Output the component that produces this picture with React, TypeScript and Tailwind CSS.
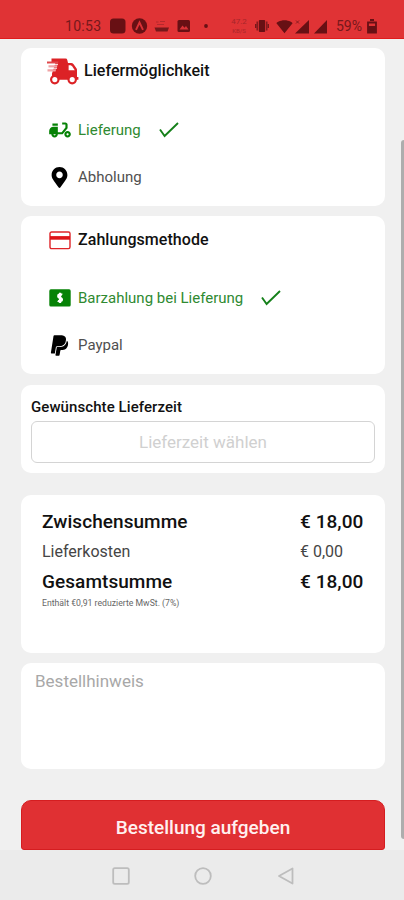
import type { ReactNode } from 'react'
import { FaMapMarkerAlt, FaPaypal } from 'react-icons/fa'
import { MdDeliveryDining, MdSignalWifi4Bar } from 'react-icons/md'

interface OptionProps {
  icon: ReactNode
  label: string
  selected?: boolean
}

function Check() {
  return (
    <svg width="20" height="16" viewBox="0 0 20 16" fill="none" stroke="#15801a" strokeWidth="1.9">
      <path d="M1 7.5 L5.6 14 L19 1" />
    </svg>
  )
}

function TruckIcon() {
  return (
    <svg width="32" height="27" viewBox="0 0 32 27" fill="none">
      <path d="M4.5 0.6 H18.5 Q20 0.6 20.3 2 L21 5 H24.2 Q25.6 5 26.6 6.3 L29.6 10.6 Q30 11.2 30 12 V19 H31.4 V21.8 H5 V15.6 L8.5 4.4 H4.5Z" fill="#dc2226" />
      <path d="M0 3.4 H11.5 L10.8 5.6 H0Z" fill="#e0484b" />
      <path d="M1.5 7.3 H10.5 L9.9 9.5 H1.5Z M0.5 11.2 H9.2 L8.5 13.4 H0.5Z" fill="#f0a3a5" />
      <path d="M2 6.4 H11 M1 10.3 H10" stroke="#fff" strokeWidth="0.9" />
      <path d="M21.6 7.2 H23.6 Q24.6 7.4 25.3 8.4 L27.8 12.2 H21.6Z" fill="#fff" />
      <circle cx="7.8" cy="21.6" r="3.7" fill="#fff" stroke="#dc2226" strokeWidth="2.2" />
      <circle cx="25.2" cy="21.6" r="3.7" fill="#fff" stroke="#dc2226" strokeWidth="2.2" />
    </svg>
  )
}

function CardIcon() {
  return (
    <svg width="22" height="19" viewBox="0 0 22 19" fill="none">
      <rect x="1" y="1" width="20" height="16.6" rx="1.6" stroke="#df2428" strokeWidth="1.4" />
      <path d="M1 6.9 H21" stroke="#df1418" strokeWidth="3.6" />
    </svg>
  )
}

function CashIcon() {
  return (
    <svg width="22" height="18" viewBox="0 0 22 18">
      <rect x="0.3" y="0.3" width="21.4" height="17.2" rx="1.6" fill="#068206" />
      <path d="M13.2 5.8 Q11 4.6 9.4 6.1 Q8.6 8.2 11 8.8 Q13.6 9.5 12.7 11.5 Q11 13 8.8 11.7 M11.1 3.8 V14" fill="none" stroke="#fff" strokeWidth="2.2" />
    </svg>
  )
}

function Option({ icon, label, selected }: OptionProps) {
  return (
    <div className="flex h-6 items-center">
      <span className="flex w-[22px] items-center justify-center">{icon}</span>
      <span className={`ml-[7px] text-[15px] ${selected ? 'text-[#2f8a31]' : 'text-[#505050]'}`}>{label}</span>
      {selected && <span className="ml-[18px]"><Check /></span>}
    </div>
  )
}

function StatusBar() {
  return (
    <header className="flex h-[39px] items-end border-b border-[#e01c1c] bg-[#e03335] pr-[27px] pb-[3px] pl-[65px] text-[#76181b]">
      <span className="h-[18px] w-[37px] text-[14px] leading-[18px] tracking-[0.3px]">10:53</span>
      {/* Notification icons */}
      <svg className="ml-[7px]" width="102" height="18" viewBox="0 0 102 18" fill="none">
        <rect x="1" y="1.5" width="15.5" height="15" rx="3.5" fill="#681014" />
        <circle cx="30.5" cy="9" r="7.7" fill="#681014" />
        <path d="M27 12.8 L30.5 5.5 L34 12.8" stroke="#d93236" strokeWidth="1.9" />
        <path d="M47 5 H49.5 M51 4.5 H56 M48 7.5 H55" stroke="#b4292d" strokeWidth="1.1" />
        <path d="M45.5 10.5 H60 L58.5 14.5 H47Z" fill="#76181b" />
        <rect x="68.5" y="3" width="12.5" height="12" rx="1.5" fill="#681014" />
        <path d="M70.5 12.5 L73.5 8.5 L75.5 10.8 L77 9 L79.5 12.5Z" fill="#d93236" />
        <circle cx="97" cy="9" r="1.9" fill="#681014" />
      </svg>
      <div className="ml-auto flex h-[18px] items-center">
        <div className="flex w-[18px] flex-col items-center text-[#a7262a]">
          <span className="text-[8px] leading-[10px]">47.2</span>
          <span className="text-[6px] leading-[8px]">KB/S</span>
        </div>
        <svg className="ml-[7px]" width="14" height="14" viewBox="0 0 14 14" fill="none">
          <rect x="3.8" y="1" width="6.4" height="12" rx="1" fill="#681014" />
          <path d="M2.2 2.5 V11.5 M11.8 2.5 V11.5 M.6 5 V9 M13.4 5 V9" stroke="#76181b" strokeWidth="1.3" />
        </svg>
        <MdSignalWifi4Bar size={17} className="ml-[7px] text-[#681014]" />
        <svg className="ml-[2px]" width="33" height="15" viewBox="0 0 33 15">
          <path d="M0 14.5 L14 1 V14.5Z M19 14.5 L32 1 V14.5Z" fill="#681014" />
          <path d="M1 1.5 L4 4.5 M4 1.5 L1 4.5" stroke="#8b1c20" />
        </svg>
        <span className="ml-[8px] w-[27px] text-[14px] leading-[18px]">59%</span>
        <svg className="ml-[4px]" width="10" height="15" viewBox="0 0 10 15" fill="none">
          <path d="M3 1 H7 M1 3.5 H9 V13.5 H1Z" stroke="#681014" strokeWidth="1.8" />
          <rect x="1" y="7" width="8" height="7" fill="#681014" />
        </svg>
      </div>
    </header>
  )
}

function NavBar() {
  return (
    <nav className="flex h-[50px] items-center justify-center gap-[64px] bg-[#ebebeb] pt-[1px] pl-[2px]">
      <svg width="18" height="18" viewBox="0 0 18 18" fill="none" stroke="#bdbdbd" strokeWidth="1.8">
        <rect x="1.2" y="1.2" width="15.6" height="15.6" rx="1.6" />
      </svg>
      <svg width="18" height="18" viewBox="0 0 18 18" fill="none" stroke="#bdbdbd" strokeWidth="1.8">
        <circle cx="9" cy="9" r="7.8" />
      </svg>
      <svg className="ml-[1px]" width="18" height="18" viewBox="0 0 18 18" fill="none" stroke="#bdbdbd" strokeWidth="1.8" strokeLinejoin="round">
        <path d="M15.5 1.5 V16.5 L2 9Z" />
      </svg>
    </nav>
  )
}

export default function App() {
  return (
    <div className="relative flex h-[900px] w-[404px] flex-col overflow-hidden bg-[#f0f0f0] font-['Roboto',sans-serif]">
      <StatusBar />

      <main className="flex flex-1 flex-col pt-[9px] pr-[19px] pl-[21px]">
        <section className="h-[158px] rounded-[10px] bg-white pt-[10px] pl-[26px]">
          <div className="flex h-[27px] items-center">
            <TruckIcon />
            <h2 className="-mt-px ml-[5px] text-[16px] font-medium tracking-[0.06px] text-[#111]">Liefermöglichkeit</h2>
          </div>
          <div className="mt-[33px] ml-[2px] flex flex-col gap-[23px]">
            <Option icon={<MdDeliveryDining size={26} className="shrink-0 text-[#068206]" />} label="Lieferung" selected />
            <Option icon={<FaMapMarkerAlt size={21} className="mr-[1px]" />} label="Abholung" />
          </div>
        </section>

        <section className="mt-[10px] h-[158px] rounded-[10px] bg-white pt-[12px] pl-[28px]">
          <div className="flex h-6 items-center">
            <CardIcon />
            <h2 className="ml-[7px] text-[16px] font-medium tracking-[0.06px] text-[#111]">Zahlungsmethode</h2>
          </div>
          <div className="mt-[34px] flex flex-col gap-[23px]">
            <Option icon={<CashIcon />} label="Barzahlung bei Lieferung" selected />
            <Option icon={<FaPaypal size={23} className="mr-[2px] shrink-0" />} label="Paypal" />
          </div>
        </section>

        <section className="mt-[11px] h-[88px] rounded-[10px] bg-white px-[10px] pt-[12px]">
          <h3 className="text-[15px] leading-5 font-medium tracking-[0.08px] text-[#111]">Gewünschte Lieferzeit</h3>
          <button className="mt-[4px] flex h-[42px] w-[344px] items-center justify-center rounded-[6px] border border-[#d4d4d4] pt-[1px] text-[17px] text-[#d0d0d0]">
            Lieferzeit wählen
          </button>
        </section>

        <section className="mt-[22px] h-[158px] rounded-[10px] bg-white px-[21px] pt-[12px] text-[#111]">
          <div className="flex h-[30px] justify-between text-[19px] leading-[30px] font-medium tracking-[0.06px]">
            <span>Zwischensumme</span>
            <span className="w-[64px] whitespace-nowrap">€ 18,00</span>
          </div>
          <div className="flex h-[30px] justify-between text-[16px] leading-[30px] text-[#454545]">
            <span>Lieferkosten</span>
            <span className="w-[64px]">€ 0,00</span>
          </div>
          <div className="flex h-[30px] justify-between text-[19px] leading-[30px] font-medium tracking-[0.06px]">
            <span>Gesamtsumme</span>
            <span className="w-[64px] whitespace-nowrap">€ 18,00</span>
          </div>
          <p className="text-[8.7px] leading-[12px] text-[#666]">Enthält €0,91 reduzierte MwSt. (7%)</p>
        </section>

        <section className="mt-[10px] h-[106px] rounded-[10px] bg-white px-[14px] pt-[6px]">
          <span className="text-[17px] leading-6 text-[#a8a8a8]">Bestellhinweis</span>
        </section>

        <button className="mt-[31px] h-[50px] rounded-t-[10px] rounded-b-[3px] border border-[#d51d20] bg-[#e03033] pt-[6px] text-[19px] font-medium text-[#fff0f0]">
          Bestellung aufgeben
        </button>
      </main>

      <NavBar />

      {/* Scroll thumb */}
      <div className="absolute top-[140px] right-0 h-[699px] w-[3px] rounded-l-sm bg-[#adadad]" />
    </div>
  )
}
